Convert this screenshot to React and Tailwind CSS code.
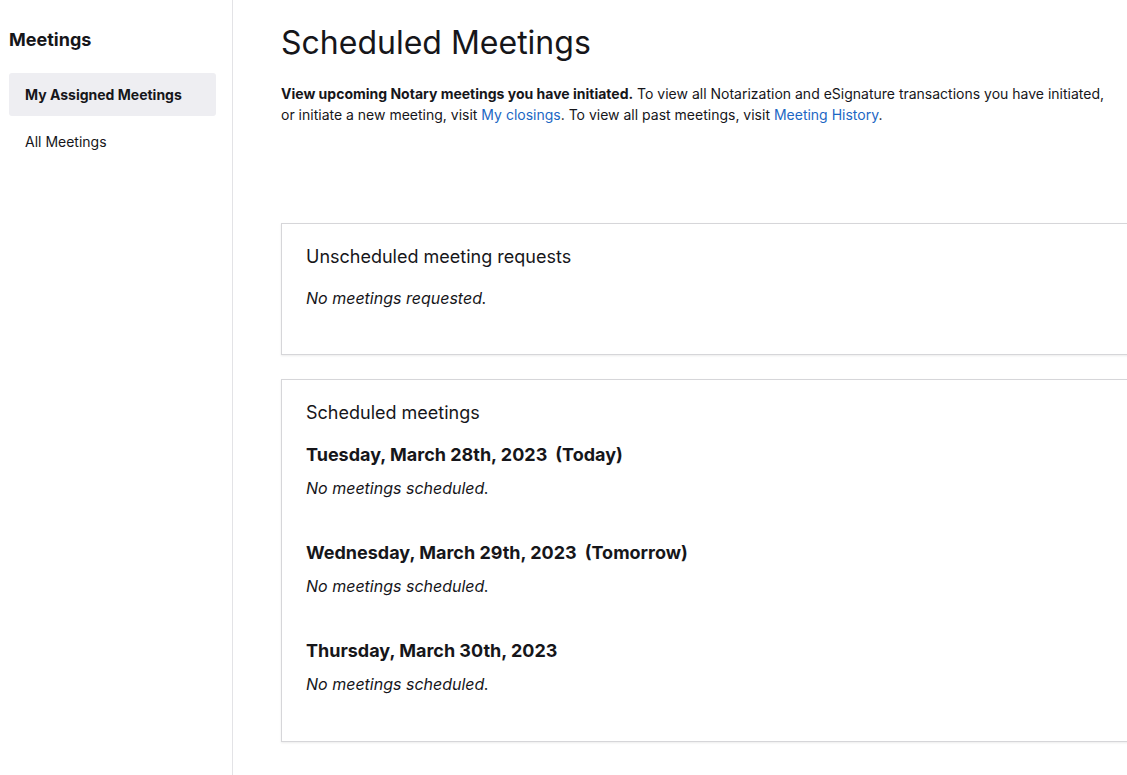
const days = [
    { date: "Tuesday, March 28th, 2023", tag: "(Today)" },
    { date: "Wednesday, March 29th, 2023", tag: "(Tomorrow)" },
    { date: "Thursday, March 30th, 2023", tag: "" },
];

function Sidebar() {
    return (
        <div className="w-[233px] shrink-0 border-r border-[#e3e3e6] min-h-[775px] px-[9px] pt-[27px]">
            <h2 className="text-[18px] leading-[26px] font-bold text-[#16161a]">Meetings</h2>
            <div className="mt-[20px] h-[43px] w-[207px] rounded-[3px] bg-[#eeeef2] flex items-center px-4 text-[14px] font-bold text-[#16161a]">
                My Assigned Meetings
            </div>
            <div className="h-[51px] flex items-center px-4 text-[14px] text-[#16161a]">
                All Meetings
            </div>
        </div>
    );
}

function Card({ title, children, className }) {
    return (
        <div className={"w-[880px] border border-[#d6d6d9] bg-white shadow-[0_1px_2px_rgba(0,0,0,0.08)] px-6 " + className}>
            <h3 className="text-[18px] leading-[26px] text-[#16161a]">{title}</h3>
            {children}
        </div>
    );
}

export default function App() {
    return (
        <div
            className="flex w-[1127px] h-[775px] overflow-hidden bg-white text-[#16161a]"
            style={{ fontFamily: "Inter, 'Noto Sans', sans-serif" }}
        >
            <Sidebar />
            <div className="pl-[48px] pt-[22px] flex-1 min-w-0">
                <h1 className="text-[32px] leading-[42px] text-[#16161a]">Scheduled Meetings</h1>
                <p className="mt-[19px] w-[830px] text-[14px] leading-[21px] text-[#16161a]">
                    <span className="font-bold">View upcoming Notary meetings you have initiated.</span>{" "}
                    To view all Notarization and eSignature transactions you have initiated, or initiate a new meeting, visit{" "}
                    <span className="text-[#1c67c4]">My closings</span>. To view all past meetings, visit{" "}
                    <span className="text-[#1c67c4]">Meeting History</span>.
                </p>

                <Card title="Unscheduled meeting requests" className="mt-[98px] h-[132px] pt-[20px]">
                    <p className="mt-[17px] text-[16px] leading-[22px] italic">No meetings requested.</p>
                </Card>

                <Card title="Scheduled meetings" className="mt-[24px] h-[363px] pt-[20px]">
                    <div className="mt-[16px] flex flex-col gap-[41px]">
                        {days.map((d) => (
                            <div key={d.date}>
                                <div className="text-[18px] leading-[26px] font-bold">
                                    {d.date}
                                    {d.tag && <span className="ml-[8px]">{d.tag}</span>}
                                </div>
                                <p className="mt-[9px] text-[16px] leading-[22px] italic">No meetings scheduled.</p>
                            </div>
                        ))}
                    </div>
                </Card>
            </div>
        </div>
    );
}
